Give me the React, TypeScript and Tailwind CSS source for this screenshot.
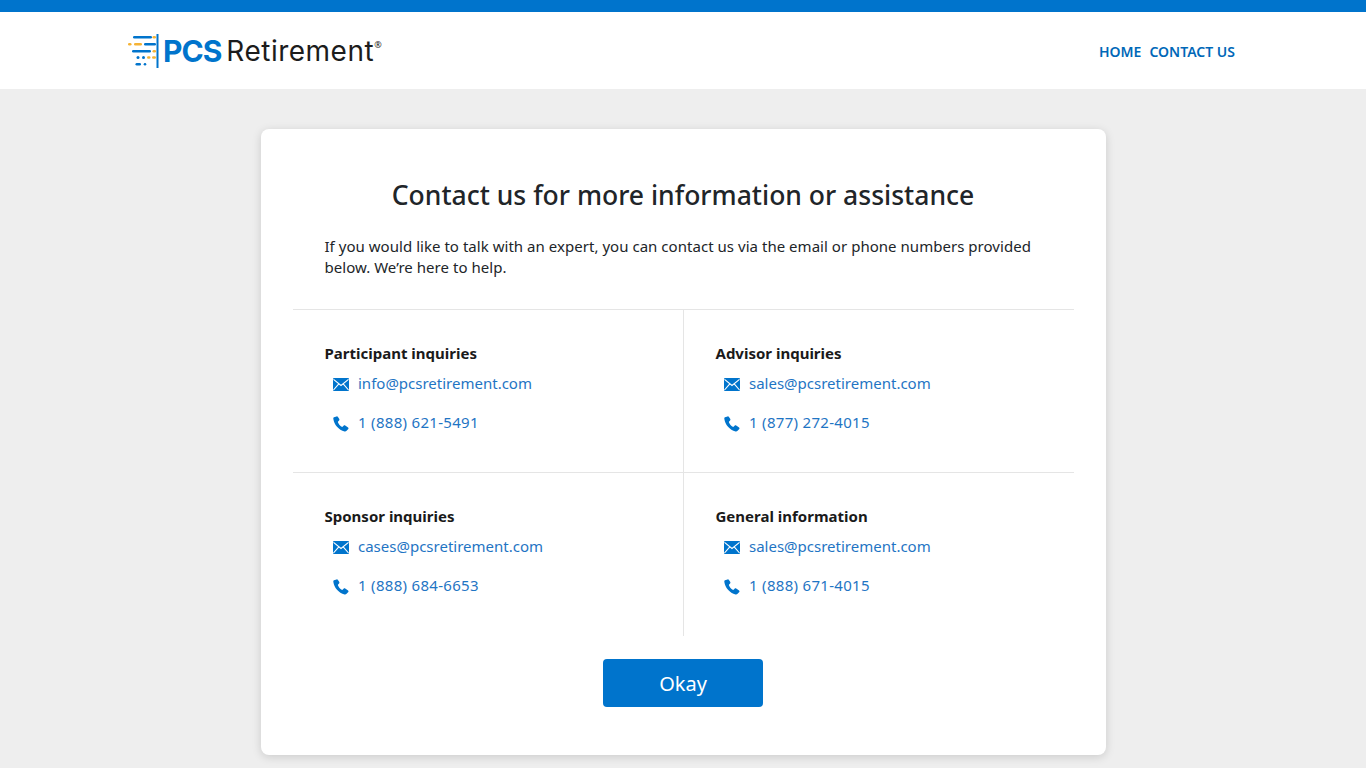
const MailIcon = () => (
  <svg className="w-4 h-[13px] mt-[2px] shrink-0" viewBox="0 0 16 13">
    <rect width="16" height="13" rx="1" fill="#0074cc" />
    <path d="M0.500 1.300L8 7.500l7.500-6.200M0.500 12l5.300-6.200M15.500 12l-5.300-6.200" fill="none" stroke="#fff" strokeWidth="1.100" />
  </svg>
)

const PhoneIcon = () => (
  <svg className="w-4 h-4 mt-[2px] shrink-0" viewBox="0 0 16 16">
    <path
      fill="#0074cc"
      d="M3.600.4L1 1.300C.4 1.600.2 2.100.3 2.800c.5 3 1.600 5.700 3.700 8 2 2.200 4.500 3.900 7.600 4.700.7.200 1.300 0 1.700-.4l2-2.200c.4-.5.3-1-.2-1.400l-2.900-2c-.5-.3-1-.3-1.400.1l-1.200 1.200c-.3.200-.6.200-.9 0C7.100 9.700 5.800 8.200 5 6.400c-.1-.3-.1-.6.100-.8l1-1.100c.4-.4.400-.9.200-1.400L4.800.8C4.500.4 4.100.2 3.600.4z"
    />
  </svg>
)

const Logo = () => (
  <div className="flex items-center">
    <svg className="w-[31px] h-[36px] shrink-0" viewBox="0 0 31 36">
      <rect x="28.500" y="1" width="2" height="34" fill="#0074cc" />
      <rect x="5" y="3" width="19" height="2.600" rx="1.300" fill="#0074cc" />
      <rect x="24.500" y="3" width="3.500" height="2.600" rx="1.300" fill="#f5b335" />
      <rect x="0" y="10" width="3.500" height="2.600" rx="1.300" fill="#f5b335" />
      <rect x="6" y="10" width="8" height="2.600" rx="1.300" fill="#f5b335" />
      <rect x="16" y="10" width="12" height="2.600" rx="1.300" fill="#0074cc" />
      <rect x="4" y="17" width="19" height="2.600" rx="1.300" fill="#0074cc" />
      <rect x="24.500" y="17" width="3.500" height="2.600" rx="1.300" fill="#f5b335" />
      <circle cx="10" cy="24.500" r="1.500" fill="#0074cc" />
      <circle cx="15.500" cy="24.500" r="1.500" fill="#0074cc" />
      <rect x="19" y="23.200" width="3.500" height="2.600" rx="1.300" fill="#f5b335" />
      <rect x="24" y="23.200" width="4" height="2.600" rx="1.300" fill="#f5b335" />
      <rect x="7.500" y="30" width="5.500" height="2.600" rx="1.300" fill="#0074cc" />
      <circle cx="17" cy="31.300" r="1.300" fill="#0074cc" />
    </svg>
    <span className="ml-[4px] pt-[1px] text-[30px] leading-none font-bold tracking-[-1px] text-[#0074cc] font-['Inter',sans-serif]">PCS</span>
    <span className="ml-[5px] pt-[1px] text-[28px] leading-none tracking-[0.5px] text-[#1c1c1c] font-['Inter',sans-serif]">Retirement</span>
    <span className="self-start mt-[7px] text-[9px] leading-none text-[#1c1c1c]">®</span>
  </div>
)

const CONTACTS = [
  { title: "Participant inquiries", email: "info@pcsretirement.com", phone: "1 (888) 621-5491" },
  { title: "Advisor inquiries", email: "sales@pcsretirement.com", phone: "1 (877) 272-4015" },
  { title: "Sponsor inquiries", email: "cases@pcsretirement.com", phone: "1 (888) 684-6653" },
  { title: "General information", email: "sales@pcsretirement.com", phone: "1 (888) 671-4015" },
]

export default function App() {
  return (
    <div className="h-[768px] bg-[#eeeeee] font-['Noto_Sans',sans-serif] text-[#212529] overflow-hidden">
      <div className="h-[12px] bg-[#0074cc]" />
      <header className="h-[77px] bg-white flex items-center justify-between pl-[128px] pr-[131px]">
        <Logo />
        <nav className="flex gap-[8px] pt-[2px] text-[14px] font-semibold text-[#0068b8]">
          <a>HOME</a>
          <a>CONTACT US</a>
        </nav>
      </header>

      <main className="flex justify-center pt-[40px]">
        <div className="w-[845px] h-[626px] bg-white rounded-[8px] shadow-[0_2px_10px_rgba(0,0,0,0.15)] px-[32px] pt-[46px]">
          <h1 className="text-[26.500px] leading-[40px] font-medium text-center">Contact us for more information or assistance</h1>
          <p className="mt-[21px] px-[32px] text-[15px] leading-[21px] tracking-[0.035px]">
            If you would like to talk with an expert, you can contact us via the email or phone numbers provided below. We’re here to help.
          </p>
          <div className="mt-[31px] grid grid-cols-[391px_390px] border-t border-[#e5e5e5]">
            {CONTACTS.map((c, i) => (
              <div
                key={c.title}
                className={`h-[163px] pt-[33px] pl-[32px] ${i % 2 === 0 ? "border-r border-[#e5e5e5]" : ""} ${i < 2 ? "border-b border-[#e5e5e5]" : ""}`}
              >
                <div className="text-[15px] leading-[20px] font-bold text-[#1a1a1a]">{c.title}</div>
                <div className="mt-[10px] pl-[8px] flex items-center gap-[9.500px] h-[21px] text-[15px] text-[#1f75c4]">
                  <MailIcon />
                  <a>{c.email}</a>
                </div>
                <div className="mt-[18px] pl-[8px] flex items-center gap-[9.500px] h-[21px] text-[15px] tracking-[0.3px] text-[#1f75c4]">
                  <PhoneIcon />
                  <a>{c.phone}</a>
                </div>
              </div>
            ))}
          </div>
          <div className="mt-[23px] flex justify-center">
            <button className="w-[160px] h-[48px] pt-[2px] rounded-[4px] bg-[#0074cc] text-white text-[20px]">Okay</button>
          </div>
        </div>
      </main>
    </div>
  )
}
